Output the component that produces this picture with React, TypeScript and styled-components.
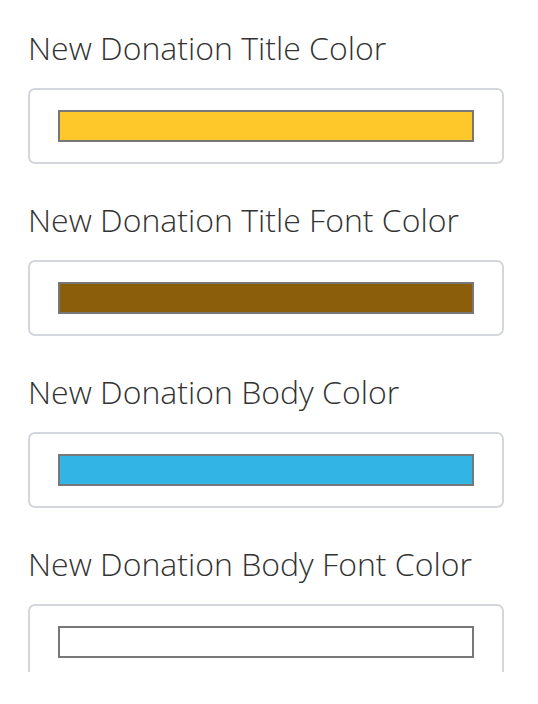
import styled, { createGlobalStyle } from "styled-components";

const GlobalStyle = createGlobalStyle`
  html, body {
    margin: 0;
    padding: 0;
    background: #ffffff;
  }
  body {
    font-family: "Open Sans", "Liberation Sans", sans-serif;
  }
`;

const Page = styled.div`
  height: 672px;
  overflow: hidden;
  padding: 28px 34px 0 28px;
  box-sizing: border-box;
  display: flex;
  flex-direction: column;
  row-gap: 36px;
`;

const Field = styled.div`
  display: flex;
  flex-direction: column;
  row-gap: 20px;
`;

const Label = styled.div`
  font-size: 32px;
  line-height: 40px;
  font-weight: 300;
  color: #333333;
  white-space: nowrap;
`;

const Card = styled.div`
  height: 76px;
  box-sizing: border-box;
  border: 2px solid #d3d7dc;
  border-radius: 7px;
  padding: 0 28px;
  display: flex;
  align-items: center;
  background: #fff;
`;

const Swatch = styled.div<{ $color: string }>`
  width: 416px;
  height: 32px;
  box-sizing: border-box;
  border: 2px solid #777777;
  background: ${(p) => p.$color};
`;

const fields = [
  { label: "New Donation Title Color", color: "#ffc82a" },
  { label: "New Donation Title Font Color", color: "#8b5e0b" },
  { label: "New Donation Body Color", color: "#32b5e5" },
  { label: "New Donation Body Font Color", color: "#ffffff" },
];

export default function App() {
  return (
    <>
      <GlobalStyle />
      <Page>
        {fields.map((f) => (
          <Field key={f.label}>
            <Label>{f.label}</Label>
            <Card>
              <Swatch $color={f.color} />
            </Card>
          </Field>
        ))}
      </Page>
    </>
  );
}
